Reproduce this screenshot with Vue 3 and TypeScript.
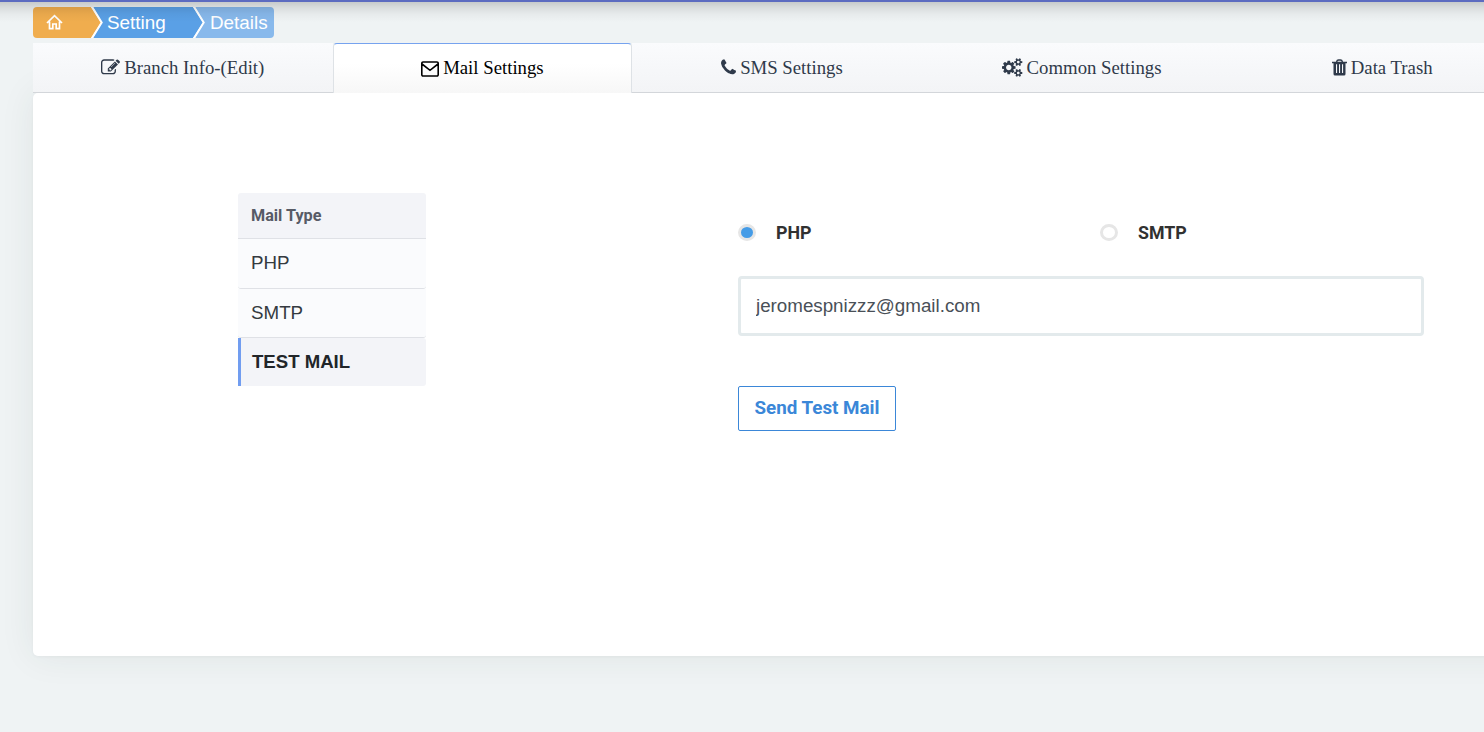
<script setup lang="ts">
import { ref } from 'vue'

interface Tab {
  label: string
  icon: 'edit' | 'mail' | 'phone' | 'cogs' | 'trash'
}

const tabs: Tab[] = [
  { label: 'Branch Info-(Edit)', icon: 'edit' },
  { label: 'Mail Settings', icon: 'mail' },
  { label: 'SMS Settings', icon: 'phone' },
  { label: 'Common Settings', icon: 'cogs' },
  { label: 'Data Trash', icon: 'trash' },
]
const activeTab = ref('Mail Settings')

const mailTypes: string[] = ['PHP', 'SMTP', 'TEST MAIL']
const activeType = ref('TEST MAIL')

const drivers: string[] = ['PHP', 'SMTP']
const driver = ref('PHP')
const email = ref('jeromespnizzz@gmail.com')
</script>

<template>
  <div class="page">
    <div class="topbar"></div>
    <nav class="crumbs">
      <a class="crumb home">
        <svg width="17" height="17" viewBox="0 0 17 17" fill="none" stroke="#fff" stroke-width="1.7">
          <path d="M1 9 L8.5 1.600 L16 9 M3.500 7.400 V14.600 H6.800 V10 H10.200 V14.600 H13.500 V7.400" />
        </svg>
      </a>
      <a class="crumb setting">Setting</a>
      <a class="crumb details">Details</a>
      <svg class="arrows" width="241" height="31" viewBox="0 0 241 31">
        <path d="M58 0 L68 15.500 L58 31 H0 V0Z" fill="#f0ad4e" />
        <path d="M160 0 L170 15.500 L160 31 H60 L69 15.500 L60 0Z" fill="#5aa0e6" />
        <path d="M241 0 V31 H162 L171 15.500 L162 0Z" fill="#88b9ec" />
        <path d="M58.500 -1 L68.700 15.500 L58.500 32 M160.500 -1 L170.700 15.500 L160.500 32" fill="none" stroke="#fff" stroke-width="2" />
      </svg>
    </nav>

    <ul class="tabs">
      <li
        v-for="tab in tabs"
        :key="tab.label"
        class="tab"
        :class="{ active: tab.label === activeTab }"
        @click="activeTab = tab.label"
      >
        <svg v-if="tab.icon === 'edit'" class="icon edit" viewBox="0 0 1792 1792">
          <path d="M888 1184l116-116-152-152-116 116v56h96v96h56zm440-720q-16-16-33 1l-350 350q-17 17-1 33t33-1l350-350q17-17 1-33zm80 594v190q0 119-84.5 203.5t-203.5 84.5h-832q-119 0-203.5-84.5t-84.5-203.5v-832q0-119 84.5-203.5t203.5-84.5h832q63 0 117 25 15 7 18 23 3 17-9 29l-49 49q-14 14-32 8-23-6-45-6h-832q-66 0-113 47t-47 113v832q0 66 47 113t113 47h832q66 0 113-47t47-113v-126q0-13 9-22l64-64q15-15 35-7t20 29zm-96-738l288 288-672 672h-288v-288zm444 132l-92 92-288-288 92-92q28-28 68-28t68 28l152 152q28 28 28 68t-28 68z" />
        </svg>
        <svg v-else-if="tab.icon === 'mail'" class="icon mail" viewBox="0 0 18 16">
          <path d="M2 1h14a1.200 1.200 0 0 1 1.200 1.200v11.600a1.200 1.200 0 0 1-1.200 1.200H2a1.200 1.200 0 0 1-1.200-1.200V2.200A1.200 1.200 0 0 1 2 1z M1 3l8 6.300L17 3" fill="none" stroke="currentColor" stroke-width="1.600" />
        </svg>
        <svg v-else-if="tab.icon === 'phone'" class="icon phone" viewBox="192 0 1408 1792">
          <path d="M1600 1240q0 27-10 70.5t-21 68.5q-21 50-122 106-94 51-186 51-27 0-53-3.5t-57.5-12.5-47-14.5-55.5-20.5-49-18q-98-35-175-83-127-79-264-216t-216-264q-48-77-83-175-3-9-18-49t-20.5-55.5-14.5-47-12.5-57.5-3.5-53q0-92 51-186 56-101 106-122 25-11 68.5-21t70.5-10q14 0 21 3 18 6 53 76 11 19 30 54t35 63.5 31 53.5q3 4 17.5 25t21.500 35.500 7 28.500q0 20-28.500 50t-62 55-62 53-28.500 46q0 9 5 22.500t8.500 20.500 14 24 11.500 19q76 137 174 235t235 174q2 1 19 11.500t24 14 20.500 8.500 22.500 5q18 0 46-28.500t53-62 55-62 50-28.500q14 0 28.500 7t35.500 21.500 25 17.500q25 15 53.500 31t63.500 35 54 30q70 35 76 53 3 7 3 21z" />
        </svg>
        <svg v-else-if="tab.icon === 'cogs'" class="icon cogs" viewBox="-32 0 1920 1792">
          <path d="M832 896q0-106-75-181t-181-75-181 75-75 181 75 181 181 75 181-75 75-181zm768 512q0-52-38-90t-90-38-90 38-38 90q0 53 37.5 90.5t90.5 37.5 90.5-37.5 37.5-90.5zm0-1024q0-52-38-90t-90-38-90 38-38 90q0 53 37.5 90.5t90.5 37.5 90.5-37.5 37.5-90.5zm-384 421v185q0 10-7 19.5t-16 10.5l-155 24q-11 35-32 76 34 48 90 115 7 11 7 20 0 12-7 19-23 30-82.5 89.5t-78.5 59.5q-11 0-21-7l-115-90q-37 19-77 31-11 108-23 155-7 24-30 24h-186q-11 0-20-7.5t-10-17.5l-23-153q-34-10-75-31l-118 89q-7 7-20 7-11 0-21-8-144-133-144-160 0-9 7-19 10-14 41-53t47-61q-23-44-35-82l-152-24q-10-1-17-9.5t-7-19.5v-185q0-10 7-19.5t16-10.5l155-24q11-35 32-76-34-48-90-115-7-11-7-20 0-12 7-20 22-30 82-89t79-59q11 0 21 7l115 90q34-18 77-32 11-108 23-154 7-24 30-24h186q11 0 20 7.5t10 17.5l23 153q34 10 75 31l118-89q8-7 20-7 11 0 21 8 144 133 144 160 0 8-7 19-12 16-42 54t-45 60q23 48 34 82l152 23q10 2 17 10.5t7 19.5zm640 533v140q0 16-149 31-12 27-30 52 51 113 51 138 0 4-4 7-122 71-124 71-8 0-46-47t-52-68q-20 2-30 2t-30-2q-14 21-52 68t-46 47q-2 0-124-71-4-3-4-7 0-25 51-138-18-25-30-52-149-15-149-31v-140q0-16 149-31 13-29 30-52-51-113-51-138 0-4 4-7 4-2 35-20t59-34 30-16q8 0 46 46.5t52 67.5q20-2 30-2t30 2q51-71 92-112l6-2q4 0 124 70 4 3 4 7 0 25-51 138 17 23 30 52 149 15 149 31zm0-1024v140q0 16-149 31-12 27-30 52 51 113 51 138 0 4-4 7-122 71-124 71-8 0-46-47t-52-68q-20 2-30 2t-30-2q-14 21-52 68t-46 47q-2 0-124-71-4-3-4-7 0-25 51-138-18-25-30-52-149-15-149-31v-140q0-16 149-31 13-29 30-52-51-113-51-138 0-4 4-7 4-2 35-20t59-34 30-16q8 0 46 46.5t52 67.5q20-2 30-2t30 2q51-71 92-112l6-2q4 0 124 70 4 3 4 7 0 25-51 138 17 23 30 52 149 15 149 31z" />
        </svg>
        <svg v-else class="icon trash" viewBox="0 0 15 17">
          <path d="M4.500 3 Q5 1 6.500 1 H8.500 Q10 1 10.500 3" fill="none" stroke="currentColor" stroke-width="1.300" />
          <path fill-rule="evenodd" d="M0 2.800H15V4.300H13.500V15Q13.500 16.500 12 16.500H3Q1.500 16.500 1.500 15V4.300H0Z M4 5.300V14H5.100V5.300Z M7 5.300V14H8.100V5.300Z M10 5.300V14H11.100V5.300Z" />
        </svg>
        <span>{{ tab.label }}</span>
      </li>
    </ul>

    <main class="panel">
      <aside class="types">
        <div class="types-head">Mail Type</div>
        <a
          v-for="type in mailTypes"
          :key="type"
          class="type"
          :class="{ active: type === activeType }"
          @click="activeType = type"
        >{{ type }}</a>
      </aside>
      <form class="form" @submit.prevent>
        <div class="radios">
          <label v-for="item in drivers" :key="item" class="radio">
            <input v-model="driver" type="radio" name="driver" :value="item" />
            <span>{{ item }}</span>
          </label>
        </div>
        <input v-model="email" class="email" type="text" />
        <button class="send" type="submit">Send Test Mail</button>
      </form>
    </main>
  </div>
</template>

<style>
html,
body {
  overflow: hidden;
  background: #eff3f4;
}
</style>

<style scoped>
.page {
  box-sizing: border-box;
  position: relative;
  width: 1484px;
  height: 732px;
  padding: 7px 0 0 33px;
  overflow: hidden;
  background: #eff3f4;
}
.topbar {
  position: absolute;
  top: 0;
  left: 0;
  right: 0;
  z-index: 3;
  height: 2px;
  background: #5c6bc0;
}
/* soft shade falling from the bar onto the page */
.topbar::after {
  content: "";
  position: absolute;
  top: 2px;
  left: 0;
  right: 0;
  height: 20px;
  background: linear-gradient(rgba(0, 0, 0, 0.17), rgba(0, 0, 0, 0.1) 25%, rgba(0, 0, 0, 0.035) 60%, transparent);
  pointer-events: none;
}
.crumbs {
  position: relative;
  display: flex;
  width: 241px;
  height: 31px;
  border-radius: 4px;
  overflow: hidden;
  font: 18.85px/31px "Liberation Sans", Arial, sans-serif;
  color: #fff;
}
.arrows {
  position: absolute;
  inset: 0;
}
.crumb {
  position: relative;
  z-index: 1;
  box-sizing: border-box;
}
.home {
  width: 60px;
  padding-left: 13px;
}
.home svg {
  display: block;
  margin-top: 7px;
}
.setting {
  width: 102px;
  padding-left: 14px;
}
.details {
  padding-left: 15px;
}
.tabs {
  display: flex;
  height: 50px;
  margin: 5px 0 0;
  padding: 0;
  list-style: none;
}
.tab {
  box-sizing: border-box;
  display: flex;
  flex: none;
  width: 299.6px;
  align-items: center;
  justify-content: center;
  gap: 4px;
  height: 50px;
  padding-top: 1px;
  border-bottom: 1px solid #d3d6da;
  background: linear-gradient(#fafbfd, #f3f4f6);
  color: #2f3a4a;
  font: 18.75px/24px "Liberation Serif", "Times New Roman", serif;
  white-space: nowrap;
}
.tab:last-child {
  padding-left: 2px;
}
.tab.active {
  padding: 0 0 1px;
  border: 1px solid #dee2e6;
  border-top-color: #76a3ef;
  border-bottom: 0;
  border-radius: 4px 4px 0 0;
  background: linear-gradient(#fff 40%, #f7f7f7);
  color: #000;
}
.icon {
  flex: none;
  fill: currentColor;
}
.edit {
  width: 19px;
  height: 19px;
  margin-top: -2px;
}
.mail {
  width: 18px;
  height: 16px;
  margin-top: 2px;
}
.phone {
  width: 15px;
  height: 19px;
  margin-top: -2px;
}
.cogs {
  width: 21px;
  height: 19px;
  margin-top: -2px;
}
.trash {
  width: 15px;
  height: 17px;
  margin-top: -2px;
}
.panel {
  box-sizing: border-box;
  display: flex;
  align-items: flex-start;
  width: 1498px;
  height: 563px;
  padding: 100px 0 0 205px;
  border-radius: 5px;
  background: #fff;
  box-shadow: 0 1px 3px rgba(40, 60, 50, 0.04), 0 0 35px rgba(40, 60, 50, 0.08);
}
.types {
  width: 188px;
  font: 18.75px/24px "Liberation Sans", Arial, sans-serif;
}
.types-head {
  box-sizing: border-box;
  height: 46px;
  padding-left: 13px;
  border-bottom: 1px solid #dfe1e6;
  border-radius: 3px 3px 0 0;
  background: #f3f4f8;
  color: #575b66;
  font: bold 16.2px/46px Roboto, sans-serif;
}
.type {
  box-sizing: border-box;
  display: block;
  height: 50px;
  padding-left: 13px;
  border-bottom: 1px solid #dfe1e6;
  border-radius: 0 0 3px 3px;
  background: #fafbfd;
  color: #343a40;
  line-height: 48px;
}
.type + .type {
  height: 49px;
}
.type.active {
  padding-left: 11px;
  border-bottom: 0;
  border-left: 3px solid #719df0;
  border-radius: 0 3px 3px 0;
  background: #f3f4f8;
  color: #212529;
  font-size: 18.6px;
  font-weight: bold;
}
.type + .type.active {
  height: 48px;
}
.form {
  width: 686px;
  margin-left: 312px;
  padding-top: 27px;
}
.radios {
  display: flex;
  height: 26px;
}
.radio {
  display: flex;
  align-items: center;
  width: 362px;
  height: 26px;
  color: #313131;
  font: bold 17.8px/26px Roboto, sans-serif;
}
.radio:last-child {
  width: auto;
}
.radio input {
  appearance: none;
  box-sizing: border-box;
  width: 18px;
  height: 17px;
  margin: -1px 20px 0 0;
  border: 3px solid #e6e6e6;
  border-radius: 50%;
  background: #fff;
}
.radio input:checked {
  background: #459ce7;
}
.email {
  box-sizing: border-box;
  display: block;
  width: 686px;
  height: 60px;
  margin: 30px 0 50px;
  padding: 0 15px;
  border: 3px solid #e3eaec;
  border-radius: 4px;
  outline: 0;
  background: #fff;
  color: #495057;
  font: 18.75px "Liberation Sans", Arial, sans-serif;
}
.send {
  box-sizing: border-box;
  width: 158px;
  height: 45px;
  padding: 0 0 2px;
  border: 1px solid #3b87d8;
  border-radius: 2px;
  background: #fff;
  color: #3b87d8;
  font: bold 18.8px Roboto, sans-serif;
}
</style>
